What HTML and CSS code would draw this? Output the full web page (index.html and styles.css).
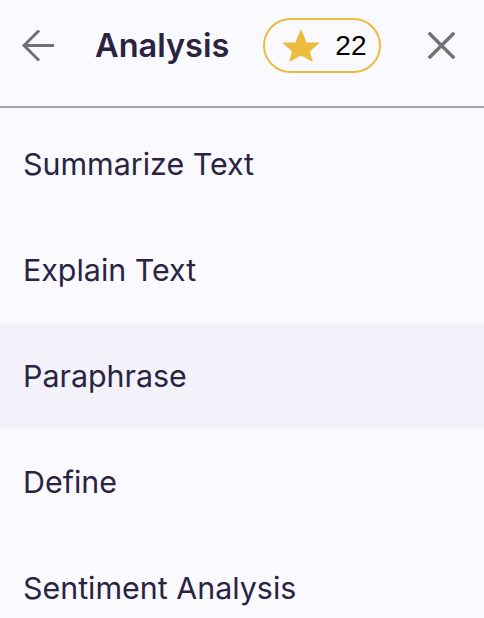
FILE: index.html
```html
<!DOCTYPE html>
<html lang="en">
<head>
<meta charset="utf-8">
<title>Analysis</title>
<link rel="stylesheet" href="styles.css">
</head>
<body>
<div class="panel">
  <header class="header">
    <button class="icon-btn back" aria-label="Back">
      <svg width="32" height="32" viewBox="0 0 32 32" fill="none" stroke="#717171" stroke-width="3" stroke-linecap="square">
        <path d="M31 15.5H2.5"/>
        <path d="M16 1.5L2 15.5L16 29.5"/>
      </svg>
    </button>
    <h1 class="title">Analysis</h1>
    <div class="badge">
      <svg class="star" width="38" height="33" viewBox="0 0 38 33">
        <polygon fill="#ecbc40" points="19,0 24.6,13.5 38,13.5 28,22.4 30.8,33 19,26.6 7.2,33 10,22.4 0,13.5 13.4,13.5"/>
      </svg>
      <span class="count">22</span>
    </div>
    <button class="icon-btn close" aria-label="Close">
      <svg width="27" height="27" viewBox="0 0 27 27" stroke="#717171" stroke-width="3.4" stroke-linecap="square">
        <path d="M2 2L25 25M25 2L2 25"/>
      </svg>
    </button>
  </header>
  <ul class="menu">
    <li class="item">Summarize Text</li>
    <li class="item">Explain Text</li>
    <li class="item active">Paraphrase</li>
    <li class="item">Define</li>
    <li class="item">Sentiment Analysis</li>
  </ul>
</div>
</body>
</html>
```

FILE: styles.css
```css
* { box-sizing: border-box; }
html, body {
  margin: 0;
  padding: 0;
  background: #f9f9fe;
  font-family: Inter, "Noto Sans", sans-serif;
  color: #2a2442;
  overflow: hidden;
}
.panel {
  width: 484px;
}
.header {
  height: 108px;
  display: flex;
  align-items: center;
  padding: 0 29px 15px 22px;
  border-bottom: 2px solid #a3a3a5;
}
.icon-btn {
  background: none;
  border: 0;
  padding: 0;
  margin: 0;
  display: flex;
  align-items: center;
  justify-content: center;
}
.back { margin-top: 1px; }
.title {
  margin: 0 0 0 41px;
  font-size: 32.5px;
  font-weight: 600;
  letter-spacing: 0;
  color: #2a2442;
}
.badge {
  margin-left: 34px;
  height: 55px;
  display: flex;
  align-items: center;
  gap: 15px;
  padding: 0 13px 0 17px;
  border: 2px solid #ecbc40;
  border-radius: 28px;
}
.star { display: block; margin-top: -1px; }
.count {
  font-family: "Liberation Sans", Arial, sans-serif;
  font-size: 28px;
  color: #000;
}
.close { margin-left: auto; }
.menu {
  list-style: none;
  margin: 0;
  padding: 3px 0 0 0;
}
.item {
  height: 106px;
  display: flex;
  align-items: center;
  padding-left: 23px;
  font-size: 30.4px;
  font-weight: 400;
}
.item.active {
  background: #f3f2fa;
}
```
